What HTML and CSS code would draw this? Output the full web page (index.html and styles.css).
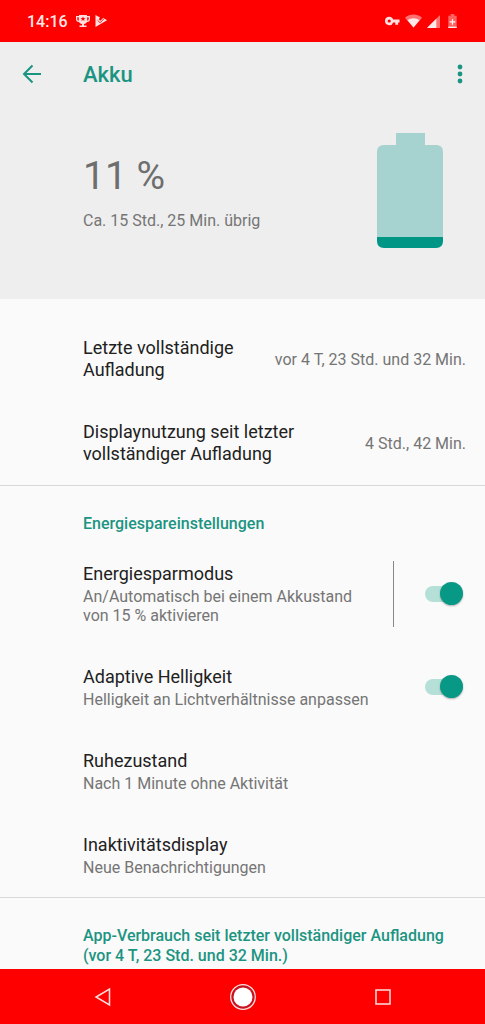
FILE: index.html
```html
<!DOCTYPE html>
<html lang="de">
<head>
  <meta charset="UTF-8">
  <title>Akku</title>
  <meta name="viewport" content="width=device-width, initial-scale=1.0">
  <link rel="stylesheet" href="styles.css">
</head>
<body>

  <div class="statusbar">
    <span class="clock">14:16</span>
    <svg width="14" height="14" viewBox="0 0 14 14" fill="#ffe0e0">
      <path fill-rule="evenodd" d="M3 1h8v1h3v3c0 2-1 3-3 3-.6 1-1.500 1.600-3 2v1.500h2.500V13h-7v-1.500H6V10c-1.500-.4-2.400-1-3-2-2 0-3-1-3-3V2h3zM1.300 3.300V5c0 1 .6 1.500 1.500 1.700V3.300zm9.900 0v3.400c.9-.2 1.500-.7 1.500-1.700V3.300zM7 2.600l-.7 1.500-1.700.1 1.300 1.100-.4 1.700L7 6.100 8.500 7l-.4-1.700 1.300-1.100-1.700-.1z"/>
    </svg>
    <svg width="12" height="14" viewBox="0 0 12 14" fill="#ffe0e0">
      <path d="M.5 1L5 3.400 3.800 5.300l1.600 1.500L8.300 3.800 12 6.200.5 13z"/>
      <path d="M2.500 6.300l2.700 2.500 4.300-4.600" fill="none" stroke="#f00" stroke-width=".8"/>
    </svg>
    <span class="spacer"></span>
    <svg width="15" height="14" viewBox="0 0 16 14" fill="#ffe0e0">
      <path fill-rule="evenodd" d="M4.500 2.500a4.500 4.500 0 0 1 4.200 3H15.500v3H14V11h-3V8.500H8.700a4.500 4.500 0 1 1-4.200-6zm0 2.800a1.700 1.700 0 1 0 0 3.400 1.700 1.700 0 0 0 0-3.400z"/>
    </svg>
    <svg width="17" height="14" viewBox="0 0 18 14">
      <path d="M9 14L0 3.500C5-.9 13-.9 18 3.500z" fill="#ff7070"/>
      <path d="M9 14L2.600 6.300c3.500-3 9.300-3 12.800 0z" fill="#ffe8e8"/>
    </svg>
    <svg width="13" height="13" viewBox="0 0 14 14">
      <path d="M0 14L14 0v14z" fill="#ff7070"/>
      <path d="M0 14L10 4v10z" fill="#ffe8e8"/>
    </svg>
    <svg class="charge" width="9" height="14" viewBox="0 0 9 15">
      <path d="M0 2h2.500V0h4v2H9v13H0z" fill="#ff6060"/>
      <path d="M0 13.500h9V15H0z" fill="#ffe8e8"/>
      <path d="M4.500 5.500v6M1.500 8.500h6" stroke="#fff" stroke-width="1.300"/>
    </svg>
  </div>

  <header class="header">
    <div class="toolbar">
      <button class="icon-btn" aria-label="Zurück">
        <svg width="20" height="20" viewBox="0 0 20 20" fill="none" stroke="#1c9482" stroke-width="2">
          <path d="M19 10H2.500M10.500 1.500L2 10l8.500 8.500"/>
        </svg>
      </button>
      <h1>Akku</h1>
      <button class="icon-btn more" aria-label="Weitere Optionen">
        <svg width="6" height="20" viewBox="0 0 6 20" fill="#1c9482">
          <circle cx="3" cy="3" r="2.400"/><circle cx="3" cy="10" r="2.400"/><circle cx="3" cy="17" r="2.400"/>
        </svg>
      </button>
    </div>
    <div class="overview">
      <div>
        <div class="percent">11 %</div>
        <div class="remaining">Ca. 15 Std., 25 Min. übrig</div>
      </div>
      <svg width="66" height="115" viewBox="0 0 66 115">
        <path d="M19 0h29v12h11q7 0 7 7v85H0V19q0-7 7-7h12z" fill="#a6d3cf"/>
        <path d="M0 104h66v4q0 7-7 7H7q-7 0-7-7z" fill="#009686"/>
      </svg>
    </div>
  </header>

  <main class="content">
    <section class="group usage">
      <div class="row">
        <div class="title">Letzte vollständige Aufladung</div>
        <div class="value">vor 4 T, 23 Std. und 32 Min.</div>
      </div>
      <div class="row">
        <div class="title">Displaynutzung seit letzter vollständiger Aufladung</div>
        <div class="value">4 Std., 42 Min.</div>
      </div>
    </section>

    <section class="group">
      <h2>Energiespareinstellungen</h2>
      <div class="row">
        <label class="text" for="saver">
          <span class="title">Energiesparmodus</span>
          <span class="summary">An/Automatisch bei einem Akkustand von 15 % aktivieren</span>
        </label>
        <div class="toggle divided"><input class="switch" type="checkbox" id="saver" checked></div>
      </div>
      <div class="row">
        <label class="text" for="adaptive">
          <span class="title">Adaptive Helligkeit</span>
          <span class="summary">Helligkeit an Lichtverhältnisse anpassen</span>
        </label>
        <div class="toggle"><input class="switch" type="checkbox" id="adaptive" checked></div>
      </div>
      <div class="row">
        <div class="text">
          <span class="title">Ruhezustand</span>
          <span class="summary">Nach 1 Minute ohne Aktivität</span>
        </div>
      </div>
      <div class="row">
        <div class="text">
          <span class="title">Inaktivitätsdisplay</span>
          <span class="summary">Neue Benachrichtigungen</span>
        </div>
      </div>
    </section>

    <section>
      <h2>App-Verbrauch seit letzter vollständiger Aufladung (vor 4 T, 23 Std. und 32 Min.)</h2>
    </section>
  </main>

  <nav class="navbar">
    <button aria-label="Zurück">
      <svg width="28" height="28" viewBox="0 0 28 28" fill="none" stroke="#ffe0e0" stroke-width="1.500">
        <path d="M20.500 6v16L7 14z"/>
      </svg>
    </button>
    <button aria-label="Startbildschirm">
      <svg width="28" height="28" viewBox="0 0 28 28">
        <circle cx="14" cy="14" r="12.300" fill="#c81420" stroke="#ffe0e0" stroke-width="1.300"/>
        <circle cx="14" cy="14" r="9.500" fill="#fff"/>
      </svg>
    </button>
    <button aria-label="Letzte Apps">
      <svg width="28" height="28" viewBox="0 0 28 28" fill="none" stroke="#ffe0e0" stroke-width="1.500">
        <path d="M7 7h14v14H7z"/>
      </svg>
    </button>
  </nav>

</body>
</html>
```
FILE: styles.css
```css
* { box-sizing: border-box; }
body {
  margin: 0;
  height: 100vh;
  display: flex;
  flex-direction: column;
  font-family: Roboto, "Liberation Sans", sans-serif;
  font-size: 16px;
  background: #fafafa;
  color: #212121;
}
button {
  border: none;
  background: none;
  padding: 0;
  cursor: pointer;
}
svg { display: block; flex-shrink: 0; }

.statusbar {
  flex-shrink: 0;
  display: flex;
  align-items: center;
  gap: 5px;
  height: 42px;
  padding: 0 28px 0 27px;
  background: #f00;
}
.clock {
  color: #ffe8e8;
  font-weight: 500;
  margin-right: 3px;
}
.charge { margin-left: 3px; }
.spacer { flex: 1; }

.header {
  flex-shrink: 0;
  background: #eee;
  padding-bottom: 51px;
}
.toolbar {
  display: flex;
  align-items: center;
  height: 64px;
  padding-right: 22px;
}
.icon-btn {
  width: 83px;
  padding: 12px 22px;
}
.icon-btn.more {
  width: auto;
  padding: 12px 0;
  margin-left: auto;
}
h1 {
  margin: 0;
  font-size: 22px;
  font-weight: 500;
  color: #1c9482;
}
.overview {
  display: flex;
  justify-content: space-between;
  align-items: flex-start;
  padding: 27px 42px 0 83px;
}
.percent {
  font-size: 39px;
  line-height: 48px;
  margin-top: 19px;
  color: #6e6e6e;
}
.remaining {
  line-height: 20px;
  margin-top: 11px;
  color: #757575;
}

.content {
  flex: 1;
  min-height: 0;
  overflow: hidden auto;
  scrollbar-width: none;
}
.group { border-bottom: 1px solid #d8d8d8; }
.usage { padding-top: 18px; }
.row {
  display: flex;
  align-items: center;
  min-height: 84px;
  padding: 20px 0 20px 83px;
}
.title {
  display: block;
  font-size: 18px;
  line-height: 22px;
}
.text {
  flex: 1;
  padding-right: 20px;
}
.usage .title { flex: 1; }
.value {
  color: #757575;
  margin: 0 19px;
  white-space: nowrap;
}
.summary {
  display: block;
  line-height: 19px;
  margin-top: 2px;
  color: #757575;
}
h2 {
  margin: 0;
  padding: 28px 30px 9px 83px;
  font-size: 16px;
  line-height: 20px;
  font-weight: 500;
  color: #1c9482;
}

.toggle {
  display: flex;
  align-items: center;
  justify-content: flex-end;
  width: 92px;
  padding-right: 22px;
}
/* without a divider the text may use the space up to the switch */
.toggle:not(.divided) {
  width: auto;
}
.divided {
  height: 66px;
  margin: -2px 0;
  border-left: 1px solid #888;
}
.switch {
  appearance: none;
  position: relative;
  width: 38px;
  height: 16px;
  margin: 0;
  border-radius: 8px;
  background: #b5e0d8;
  cursor: pointer;
}
.switch::before {
  content: "";
  position: absolute;
  top: -4px;
  left: 0;
  width: 23px;
  height: 23px;
  border-radius: 50%;
  background: #fafafa;
  box-shadow: 0 1px 2px rgba(0, 0, 0, 0.3);
}
.switch:checked::before {
  left: 15px;
  background: #089886;
}

.navbar {
  flex-shrink: 0;
  display: flex;
  justify-content: center;
  align-items: center;
  gap: 28px;
  height: 55px;
  background: #f00;
}
.navbar button { padding: 0 42px; }
```
